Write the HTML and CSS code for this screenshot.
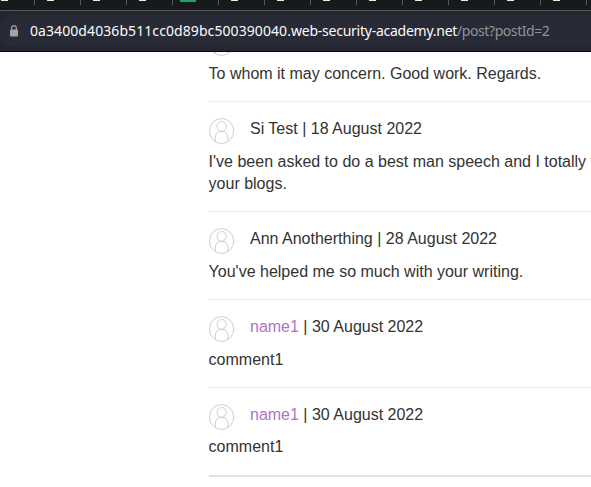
FILE: index.html
```html
<!DOCTYPE html>
<html lang="en">
<head>
<meta charset="utf-8">
<title>Blog post</title>
<link rel="stylesheet" href="styles.css">
</head>
<body>
<svg width="0" height="0" class="defs">
  <symbol id="avatar" viewBox="0 0 26 26">
    <g fill="none" stroke="#cdd0d0" stroke-width="1">
      <ellipse cx="12.6" cy="13" rx="12.1" ry="12.5"/>
      <ellipse cx="12.6" cy="8.4" rx="4.6" ry="4.9"/>
      <path d="M6.4 24V19.5C6.4 16 8.4 13.6 10.4 13.6H14.8C16.9 13.6 18.8 16 18.8 19.5V24"/>
    </g>
  </symbol>
</svg>
<header class="browser">
  <div class="tabs">
    <div class="tab"><i></i></div><div class="tab"><i></i></div><div class="tab"><i></i></div><div class="tab"><i></i></div><div class="tab sheet"><i></i></div><div class="tab"><i></i></div><div class="tab"><i></i></div><div class="tab"><i></i></div><div class="tab"><i></i></div><div class="tab"><i></i></div><div class="tab"><i></i></div><div class="tab"><i></i></div><div class="tab"><i></i></div>
  </div>
  <div class="toolbar">
    <div class="address">
      <svg class="lock" width="8" height="12" viewBox="0 0 8 12"><path d="M1.7 5V3a2.3 2.3 0 0 1 4.6 0v2" fill="none" stroke="#a3a3a9" stroke-width="1.2"/><rect y="4.5" width="8" height="7" rx="1" fill="#a3a3a9"/></svg>
      <span class="url"><span class="sub">0a3400d4036b511cc0d89bc500390040.</span><span class="domain">web-security-academy.net</span><span class="path">/post?postId=2</span></span>
    </div>
  </div>
</header>
<main class="comments">
  <section class="comment">
    <p class="author"><svg class="avatar"><use href="#avatar"/></svg></p>
    <p class="text">To whom it may concern. Good work. Regards.</p>
  </section>
  <section class="comment">
    <p class="author"><svg class="avatar"><use href="#avatar"/></svg><span>Si Test | 18 August 2022</span></p>
    <p class="text">I've been asked to do a best man speech and I totally t<br>your blogs.</p>
  </section>
  <section class="comment">
    <p class="author"><svg class="avatar"><use href="#avatar"/></svg><span>Ann Anotherthing | 28 August 2022</span></p>
    <p class="text">You've helped me so much with your writing.</p>
  </section>
  <section class="comment">
    <p class="author"><svg class="avatar"><use href="#avatar"/></svg><span><a>name1</a> | 30 August 2022</span></p>
    <p class="text">comment1</p>
  </section>
  <section class="comment">
    <p class="author"><svg class="avatar"><use href="#avatar"/></svg><span><a>name1</a> | 30 August 2022</span></p>
    <p class="text">comment1</p>
  </section>
</main>
</body>
</html>
```
FILE: styles.css
```css
* { box-sizing: border-box; }
body {
  margin: 0;
  height: 487px;
  overflow: hidden;
  background: #fff;
  color: #333332;
  font: 16px/22px "Liberation Sans", Arial, sans-serif;
}
.defs { display: block; }
.browser {
  position: relative;
  height: 52px;
  overflow: hidden;
  background: #23252f;
  border-bottom: 1px solid #07080c;
}
.tabs {
  display: flex;
  height: 11px;
  overflow: hidden;
  margin-left: -11px;
  background: #18191d;
  border-bottom: 1px solid #55565a;
}
.tab {
  flex: 0 0 46px;
  height: 10px;
  padding-left: 12px;
  background: linear-gradient(#57585b, #57585b) right top / 1px 5px no-repeat;
}
.tab i {
  display: block;
  width: 7px;
  height: 1px;
  background: #e6eae6;
}
.tab.sheet { padding-left: 7px; }
.tab.sheet i { width: 16px; height: 2px; background: #16a563; }
.toolbar { height: 40px; padding: 4px 0; }
.address {
  display: flex;
  align-items: center;
  height: 32px;
  margin-left: -2px;
  padding-left: 12px;
  border-radius: 16px 0 0 16px;
  background: #282a35;
}
.lock { flex: none; margin-right: 12px; }
.url {
  color: #fbfbfe;
  font: 14px/20px "Noto Sans", sans-serif;
  white-space: nowrap;
}
.sub { letter-spacing: 0.08px; }
.domain { letter-spacing: -0.25px; }
.path { color: #929399; letter-spacing: -0.43px; }
.comments { margin: -22px 0 0 208.6px; overflow: hidden; }
.comment {
  padding: 16px 0;
  border-bottom: 1px solid #ececec;
}
.comment:first-child { padding-top: 0; }
.comment:last-child { padding-bottom: 17px; border-bottom: 2px solid #e2e2e2; }
.comment:last-child .author { height: 32px; }
p { margin: 0; }
.author {
  display: flex;
  gap: 15.4px;
  height: 33px;
}
.author a { color: #b071c6; }
.avatar { flex: none; width: 26px; height: 26px; }
.text { white-space: nowrap; }
```
